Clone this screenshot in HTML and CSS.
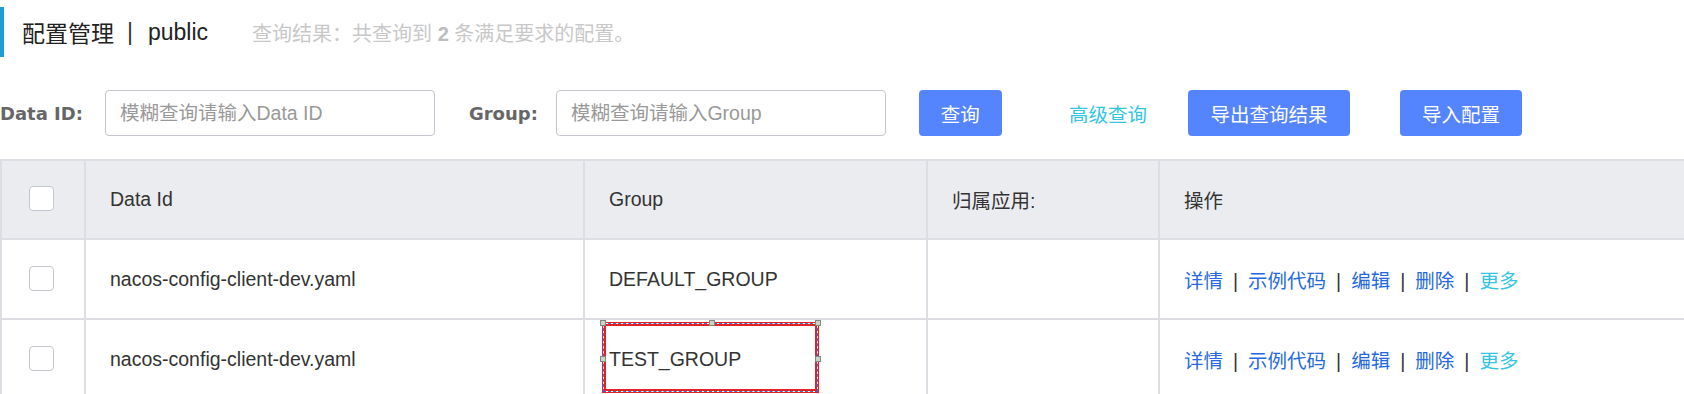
FILE: index.html
```html
<!DOCTYPE html>
<html lang="zh-CN">
<head>
<meta charset="utf-8">
<title>配置管理</title>
<link rel="stylesheet" href="styles.css">
</head>
<body>
<div class="page">
  <div class="title-bar">
    <span class="title">配置管理</span><span class="title-sep">|</span><span class="ns">public</span>
    <span class="summary">查询结果：共查询到 <b>2</b> 条满足要求的配置。</span>
  </div>

  <div class="search">
    <label class="label label-id">Data ID:</label>
    <input class="input" type="text" placeholder="模糊查询请输入Data ID">
    <label class="label label-group">Group:</label>
    <input class="input" type="text" placeholder="模糊查询请输入Group">
    <button class="btn btn-query">查询</button>
    <a class="adv">高级查询</a>
    <button class="btn btn-export">导出查询结果</button>
    <button class="btn btn-import">导入配置</button>
  </div>

  <div class="table-wrap">
    <table class="table">
      <colgroup>
        <col class="c-check"><col class="c-id"><col class="c-group"><col class="c-app"><col class="c-op">
      </colgroup>
      <thead>
        <tr>
          <th class="cell-check"><span class="checkbox"></span></th>
          <th>Data Id</th>
          <th>Group</th>
          <th>归属应用:</th>
          <th>操作</th>
        </tr>
      </thead>
      <tbody>
        <tr>
          <td class="cell-check"><span class="checkbox"></span></td>
          <td>nacos-config-client-dev.yaml</td>
          <td>DEFAULT_GROUP</td>
          <td></td>
          <td class="ops"><a class="op">详情</a><span class="op-sep">|</span><a class="op">示例代码</a><span class="op-sep">|</span><a class="op">编辑</a><span class="op-sep">|</span><a class="op">删除</a><span class="op-sep">|</span><a class="op more">更多</a></td>
        </tr>
        <tr>
          <td class="cell-check"><span class="checkbox"></span></td>
          <td>nacos-config-client-dev.yaml</td>
          <td>TEST_GROUP</td>
          <td></td>
          <td class="ops"><a class="op">详情</a><span class="op-sep">|</span><a class="op">示例代码</a><span class="op-sep">|</span><a class="op">编辑</a><span class="op-sep">|</span><a class="op">删除</a><span class="op-sep">|</span><a class="op more">更多</a></td>
        </tr>
      </tbody>
    </table>
  </div>

  <div class="annot">
    <div class="annot-dash"><div class="annot-core"></div></div>
    <span class="handle h-tl"></span><span class="handle h-tm"></span><span class="handle h-tr"></span>
    <span class="handle h-ml"></span><span class="handle h-mr"></span>
  </div>
</div>
</body>
</html>
```

FILE: styles.css
```css
html, body {
  margin: 0;
  padding: 0;
  overflow: hidden;
  background: #fff;
}

body {
  font-family: "Liberation Sans", "Noto Sans CJK SC", sans-serif;
  font-size: 19.5px;
  color: #333;
}

.page {
  position: relative;
  width: 1684px;
  height: 394px;
  overflow: hidden;
}

/* ---------- title ---------- */
.title-bar {
  margin-top: 7px;
  height: 50px;
  border-left: 4px solid #1b9dd6;
  padding-left: 18px;
  display: flex;
  align-items: center;
  white-space: nowrap;
}

.title,
.ns {
  font-size: 23px;
  color: #222;
}

.title-sep {
  font-size: 23px;
  color: #333;
  margin: 0 15px 0 13px;
}

.summary {
  margin-left: 44px;
  font-size: 20px;
  color: #c8c8c8;
}

.summary b {
  color: #bdbdbd;
}

/* ---------- search ---------- */
.search {
  margin-top: 33px;
  height: 46px;
  display: flex;
  align-items: center;
  white-space: nowrap;
}

.label {
  font-family: "DejaVu Sans", sans-serif;
  font-weight: bold;
  font-size: 18px;
  color: #666;
}

.label-id {
  margin-right: 22px;
}

.label-group {
  margin-left: 34px;
  margin-right: 18px;
}

.input {
  box-sizing: border-box;
  width: 330px;
  height: 46px;
  border: 1px solid #c4c6cf;
  border-radius: 4px;
  padding: 0 14px;
  font-family: inherit;
  font-size: 19.5px;
  color: #333;
  outline: none;
  background: #fff;
}

.input::placeholder {
  color: #999;
}

.btn {
  box-sizing: border-box;
  height: 46px;
  border: none;
  border-radius: 4px;
  background: #5584ff;
  color: #fff;
  font-family: inherit;
  font-size: 19.5px;
  padding: 0;
}

.btn-query {
  margin-left: 33px;
  width: 83px;
}

.adv {
  margin-left: 67px;
  color: #33c5e3;
  font-size: 19.5px;
}

.btn-export {
  margin-left: 41px;
  width: 162px;
}

.btn-import {
  margin-left: 50px;
  width: 122px;
}

/* ---------- table ---------- */
.table-wrap {
  margin-top: 23px;
  width: 1684px;
  overflow: hidden;
}

.table {
  width: 1720px;
  table-layout: fixed;
  border-collapse: collapse;
}

.c-check { width: 84px; }
.c-id { width: 499px; }
.c-group { width: 343px; }
.c-app { width: 232px; }
.c-op { width: 562px; }

.table th,
.table td {
  border: 2px solid #dcdee3;
  padding: 0 0 0 24px;
  text-align: left;
  font-weight: normal;
  white-space: nowrap;
  color: #333;
}

.table th {
  background: #ebecf0;
  height: 77px;
}

.table td {
  height: 78px;
  background: #fff;
}

.table .cell-check {
  padding: 0 4px 0 0;
  text-align: center;
}

.checkbox {
  display: inline-block;
  box-sizing: border-box;
  width: 25px;
  height: 25px;
  border: 1px solid #c4c6cf;
  border-radius: 4px;
  background: #fff;
  vertical-align: middle;
  position: relative;
  top: -1px;
}

.op {
  color: #2469e0;
}

.op.more {
  color: #33c5e3;
}

.op-sep {
  margin: 0 10px;
  color: #333;
}

/* ---------- annotation overlay ---------- */
.annot {
  position: absolute;
  left: 602px;
  top: 322px;
  width: 217px;
  height: 71px;
  box-sizing: border-box;
  border: 1px solid #e5202a;
}

.annot-dash {
  box-sizing: border-box;
  height: 100%;
  border: 1px dashed #3a6fd8;
}

.annot-core {
  box-sizing: border-box;
  height: 100%;
  border: 2px solid #e5202a;
}

.handle {
  position: absolute;
  width: 4px;
  height: 4px;
  background: #c9d3c6;
  border: 1px solid #7f8c7d;
}

.h-tl { left: -3px; top: -3px; }
.h-tm { left: 106px; top: -3px; }
.h-tr { right: -3px; top: -3px; }
.h-ml { left: -3px; top: 33px; }
.h-mr { right: -3px; top: 33px; }
```
